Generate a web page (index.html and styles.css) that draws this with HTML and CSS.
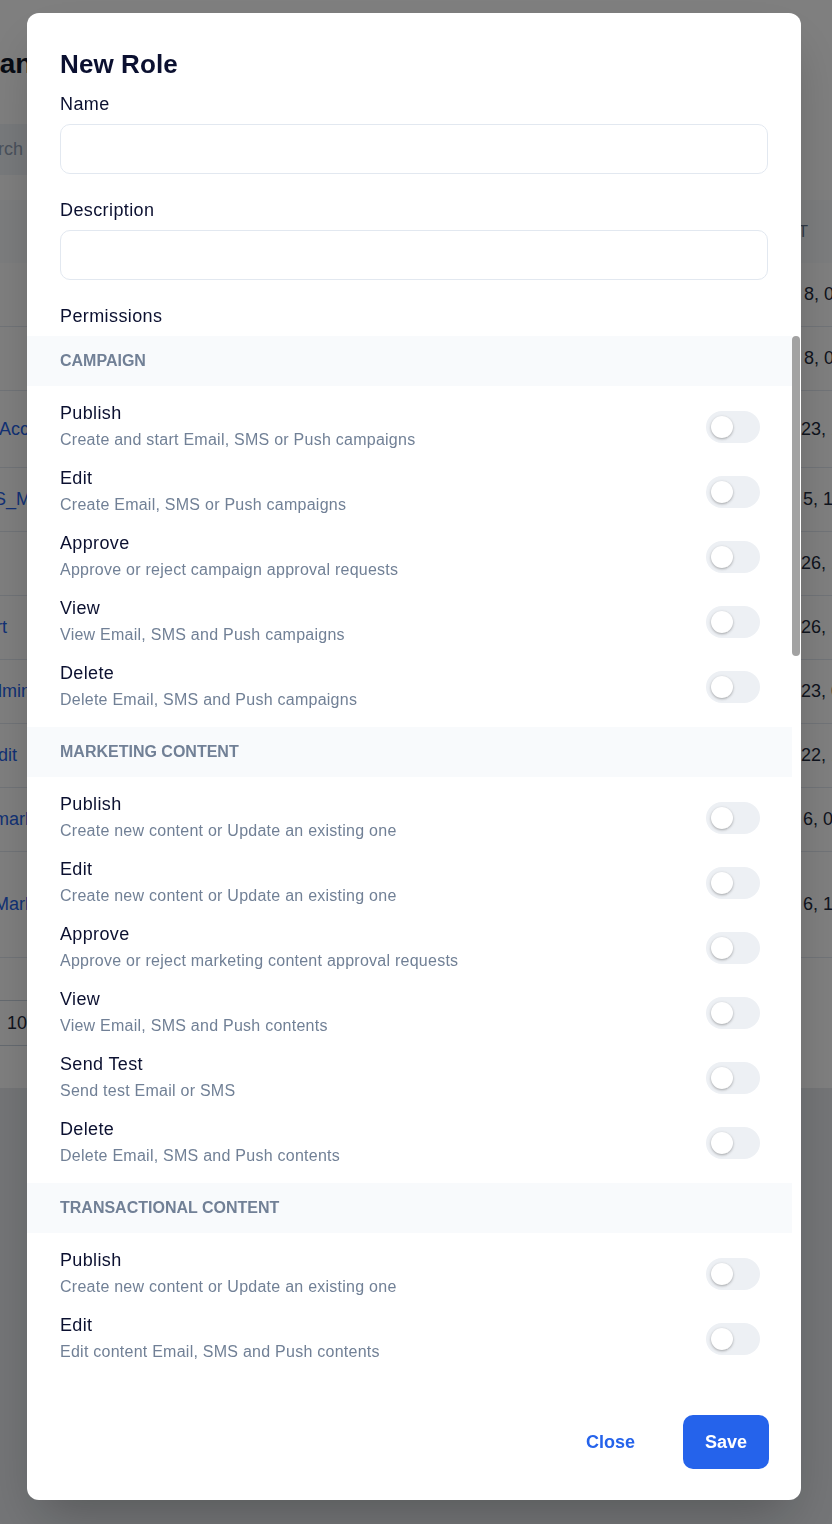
FILE: index.html
```html
<!DOCTYPE html>
<html lang="en">
<head>
<meta charset="utf-8">
<title>New Role</title>
<link rel="stylesheet" href="styles.css">
</head>
<body>
<div class="page">
  <h1 class="page-title">Role Management</h1>
  <div class="search">Search roles</div>
  <div class="card">
    <div class="row row-head"><div class="c-name">NAME</div><div class="c-date">CREATED AT</div></div>
    <div class="row"><div class="c-name"><a class="link">Viewer</a></div><div class="c-date">Dec 8, 09:41 AM</div></div>
    <div class="row"><div class="c-name"><a class="link">Editor</a></div><div class="c-date">Dec 8, 03:15 PM</div></div>
    <div class="row row-tall"><div class="c-name"><a class="link">Admin Access</a></div><div class="c-date">Jan 23, 11:02 AM</div></div>
    <div class="row"><div class="c-name"><a class="link">USERS_MANAGER</a></div><div class="c-date">Feb 5, 15:20 PM</div></div>
    <div class="row"><div class="c-name"><a class="link">QA</a></div><div class="c-date">Jan 26, 10:12 AM</div></div>
    <div class="row"><div class="c-name"><a class="link">Support</a></div><div class="c-date">Jan 26, 11:40 AM</div></div>
    <div class="row"><div class="c-name"><a class="link">Sub Admintest</a></div><div class="c-date">Jan 23, 09:05 AM</div></div>
    <div class="row"><div class="c-name"><a class="link">Only Edit</a></div><div class="c-date">Jan 22, 14:33 PM</div></div>
    <div class="row"><div class="c-name"><a class="link">Email marketing</a></div><div class="c-date">Feb 6, 08:18 AM</div></div>
    <div class="row row-xtall"><div class="c-name"><a class="link">Email Marketing Team</a></div><div class="c-date">Feb 6, 11:27 AM</div></div>
    <div class="card-foot">
      <div class="rows-select"><span>10</span><span class="caret">&#9662;</span></div>
    </div>
  </div>
</div>

<div class="overlay">
  <div class="modal" role="dialog" aria-labelledby="modal-title">
    <div class="modal-head">
      <h2 class="modal-title" id="modal-title">New Role</h2>
      <label class="label" for="role-name">Name</label>
      <input class="field" id="role-name" type="text">
      <label class="label" for="role-desc">Description</label>
      <input class="field" id="role-desc" type="text">
      <div class="label label-last">Permissions</div>
    </div>

    <div class="perm-scroll">
      <div class="perm-list">
        <div class="group-head">Campaign</div>
        <div class="group-items">
          <div class="perm"><div><div class="perm-title">Publish</div><div class="perm-desc">Create and start Email, SMS or Push campaigns</div></div><span class="switch" role="switch" aria-checked="false"><span class="knob"></span></span></div>
          <div class="perm"><div><div class="perm-title">Edit</div><div class="perm-desc">Create Email, SMS or Push campaigns</div></div><span class="switch" role="switch" aria-checked="false"><span class="knob"></span></span></div>
          <div class="perm"><div><div class="perm-title">Approve</div><div class="perm-desc">Approve or reject campaign approval requests</div></div><span class="switch" role="switch" aria-checked="false"><span class="knob"></span></span></div>
          <div class="perm"><div><div class="perm-title">View</div><div class="perm-desc">View Email, SMS and Push campaigns</div></div><span class="switch" role="switch" aria-checked="false"><span class="knob"></span></span></div>
          <div class="perm"><div><div class="perm-title">Delete</div><div class="perm-desc">Delete Email, SMS and Push campaigns</div></div><span class="switch" role="switch" aria-checked="false"><span class="knob"></span></span></div>
        </div>

        <div class="group-head">Marketing Content</div>
        <div class="group-items">
          <div class="perm"><div><div class="perm-title">Publish</div><div class="perm-desc">Create new content or Update an existing one</div></div><span class="switch" role="switch" aria-checked="false"><span class="knob"></span></span></div>
          <div class="perm"><div><div class="perm-title">Edit</div><div class="perm-desc">Create new content or Update an existing one</div></div><span class="switch" role="switch" aria-checked="false"><span class="knob"></span></span></div>
          <div class="perm"><div><div class="perm-title">Approve</div><div class="perm-desc">Approve or reject marketing content approval requests</div></div><span class="switch" role="switch" aria-checked="false"><span class="knob"></span></span></div>
          <div class="perm"><div><div class="perm-title">View</div><div class="perm-desc">View Email, SMS and Push contents</div></div><span class="switch" role="switch" aria-checked="false"><span class="knob"></span></span></div>
          <div class="perm"><div><div class="perm-title">Send Test</div><div class="perm-desc">Send test Email or SMS</div></div><span class="switch" role="switch" aria-checked="false"><span class="knob"></span></span></div>
          <div class="perm"><div><div class="perm-title">Delete</div><div class="perm-desc">Delete Email, SMS and Push contents</div></div><span class="switch" role="switch" aria-checked="false"><span class="knob"></span></span></div>
        </div>

        <div class="group-head">Transactional Content</div>
        <div class="group-items">
          <div class="perm"><div><div class="perm-title">Publish</div><div class="perm-desc">Create new content or Update an existing one</div></div><span class="switch" role="switch" aria-checked="false"><span class="knob"></span></span></div>
          <div class="perm"><div><div class="perm-title">Edit</div><div class="perm-desc">Edit content Email, SMS and Push contents</div></div><span class="switch" role="switch" aria-checked="false"><span class="knob"></span></span></div>
          <div class="perm"><div><div class="perm-title">Approve</div><div class="perm-desc">Approve or reject transactional content approval requests</div></div><span class="switch" role="switch" aria-checked="false"><span class="knob"></span></span></div>
          <div class="perm"><div><div class="perm-title">View</div><div class="perm-desc">View Email, SMS and Push contents</div></div><span class="switch" role="switch" aria-checked="false"><span class="knob"></span></span></div>
          <div class="perm"><div><div class="perm-title">Delete</div><div class="perm-desc">Delete Email, SMS and Push contents</div></div><span class="switch" role="switch" aria-checked="false"><span class="knob"></span></span></div>
        </div>
      </div>
      <div class="scrollbar"><div class="thumb"></div></div>
    </div>

    <div class="modal-foot">
      <button class="btn btn-ghost" type="button">Close</button>
      <button class="btn btn-primary" type="button">Save</button>
    </div>
  </div>
</div>
</body>
</html>
```

FILE: styles.css
```css
* { box-sizing: border-box; }

html, body {
  margin: 0;
  padding: 0;
}

body {
  font-family: "Liberation Sans", Arial, Helvetica, sans-serif;
  background: #e8ebef;
  color: #0f172a;
  height: 1524px;
  overflow: hidden;
}

/* ---------- background page ---------- */
.page {
  margin-left: -92px;
  width: 1200px;
  background: #fff;
  padding-top: 45px;
}

.page-title {
  margin: 0;
  font-size: 28px;
  line-height: 38px;
  font-weight: 700;
  color: #0f172a;
}

.search {
  margin: 41px 0 0 46px;
  width: 420px;
  height: 51px;
  background: #f1f5f9;
  border-radius: 8px;
  display: flex;
  align-items: center;
  padding-left: 12px;
  font-size: 18px;
  color: #94a3b8;
}

.card {
  margin: 25px 0 0 12px;
  width: 1100px;
  background: #fff;
}

.row {
  display: grid;
  grid-template-columns: 847px 1fr;
  align-items: center;
  height: 64px;
  border-bottom: 1px solid #e2e8f0;
  font-size: 18px;
  color: #1e293b;
}

.row-head {
  grid-template-columns: 790px 1fr;
  height: 63px;
  background: #f8fafc;
  border-bottom: 0;
  font-size: 16px;
  color: #64748b;
}

.row-tall { height: 77px; }
.row-xtall { height: 106px; }

.c-name { padding-left: 24px; white-space: nowrap; }
.c-date { white-space: nowrap; }

.link { color: #2563eb; }

.card-foot {
  height: 130px;
  display: flex;
  align-items: center;
  padding-left: 74px;
}

.rows-select {
  height: 46px;
  border: 1px solid #cbd5e1;
  border-radius: 6px;
  padding: 0 12px;
  display: flex;
  align-items: center;
  gap: 24px;
  font-size: 18px;
  color: #1e293b;
}

.caret { font-size: 12px; color: #64748b; }

/* ---------- overlay + modal ---------- */
.overlay {
  position: fixed;
  inset: 0;
  background: rgba(0, 0, 0, 0.5);
  display: flex;
  justify-content: center;
  align-items: flex-start;
  padding: 13px 4px 0 0;
}

.modal {
  width: 774px;
  height: 1487px;
  background: #fff;
  border-radius: 12px;
  box-shadow: 0 25px 50px -12px rgba(0, 0, 0, 0.25);
  display: flex;
  flex-direction: column;
  overflow: hidden;
}

.modal-head {
  flex: none;
  padding: 32px 33px 8px;
}

.modal-title {
  margin: 0 0 9px;
  font-size: 26px;
  line-height: 38px;
  font-weight: 700;
  letter-spacing: 0.1px;
  color: #0b1030;
}

.label {
  display: block;
  font-size: 18px;
  line-height: 24px;
  letter-spacing: 0.4px;
  margin-bottom: 8px;
  color: #0b1030;
}

.label-last { margin-bottom: 0; }

.field {
  display: block;
  width: 100%;
  height: 50px;
  margin: 0 0 24px;
  padding: 0 16px;
  border: 1px solid #e2e8f0;
  border-radius: 10px;
  background: #fff;
  font: 18px "Liberation Sans", Arial, sans-serif;
  color: #0f172a;
  outline: none;
}

.perm-scroll {
  flex: 1;
  min-height: 0;
  display: flex;
}

.perm-list {
  flex: 1;
  min-width: 0;
  overflow: hidden;
}

.scrollbar {
  flex: none;
  width: 9px;
}

.thumb {
  width: 8px;
  height: 320px;
  border-radius: 4px;
  background: #a2a2a2;
}

.group-head {
  height: 50px;
  background: #f8fafc;
  display: flex;
  align-items: center;
  padding-left: 33px;
  font-size: 16px;
  font-weight: 700;
  color: #718096;
  text-transform: uppercase;
}

.group-items { padding: 8px 0; }

.perm {
  display: flex;
  align-items: center;
  justify-content: space-between;
  padding: 7px 32px 7px 33px;
}

.perm-title {
  font-size: 18px;
  line-height: 24px;
  letter-spacing: 0.35px;
  color: #0b1030;
}

.perm-desc {
  margin-top: 3px;
  font-size: 16px;
  line-height: 24px;
  letter-spacing: 0.25px;
  color: #718096;
}

.switch {
  flex: none;
  width: 54px;
  height: 32px;
  border-radius: 16px;
  background: #edf0f4;
  display: flex;
  align-items: center;
  padding-left: 5px;
}

.knob {
  width: 22px;
  height: 22px;
  border-radius: 50%;
  background: #fff;
  box-shadow: 0 1px 3px rgba(0, 0, 0, 0.25), 0 1px 2px rgba(0, 0, 0, 0.08);
}

.modal-foot {
  flex: none;
  display: flex;
  justify-content: flex-end;
  gap: 26px;
  padding: 32px 32px 31px;
}

.btn {
  height: 54px;
  padding: 0 22px;
  border: 0;
  border-radius: 10px;
  font: 700 18px/1 "Liberation Sans", Arial, sans-serif;
  cursor: pointer;
}

.btn-ghost {
  background: transparent;
  color: #2563eb;
}

.btn-primary {
  background: #2563eb;
  color: #fff;
}
```
